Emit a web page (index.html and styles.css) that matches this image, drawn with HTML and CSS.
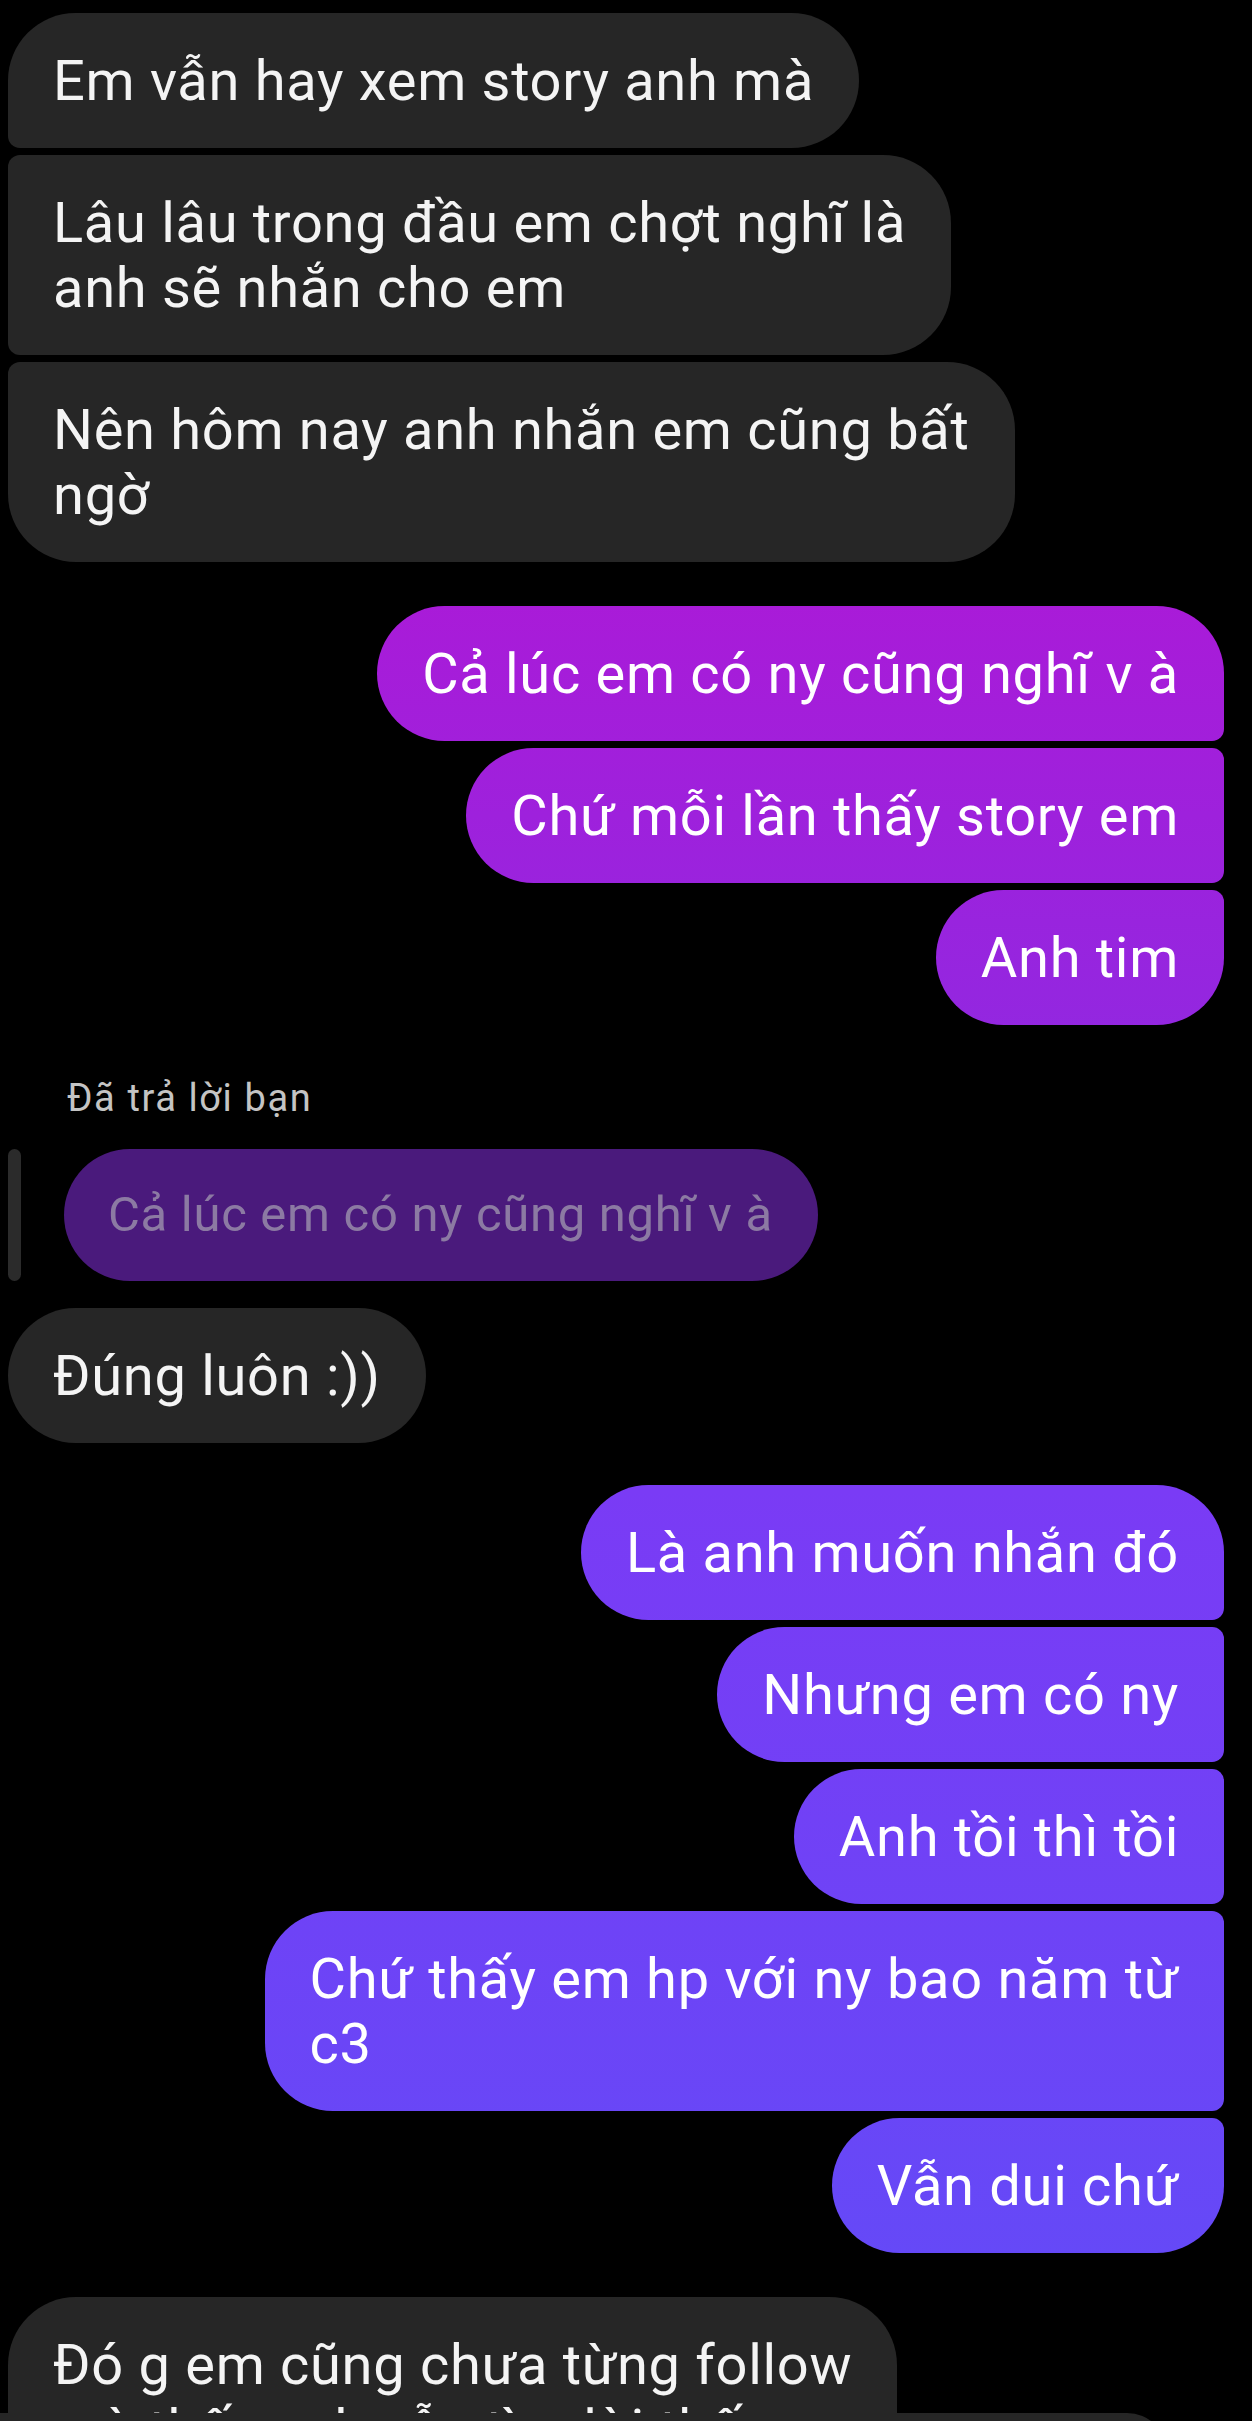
FILE: index.html
```html
<!DOCTYPE html>
<html lang="vi">
<head>
<meta charset="utf-8">
<title>Chat</title>
<link rel="stylesheet" href="styles.css">
</head>
<body>
<div class="chat">
  <div class="group in">
    <div class="msg first">Em vẫn hay xem story anh mà</div>
    <div class="msg mid">Lâu lâu trong đầu em chợt nghĩ là<br>anh sẽ nhắn cho em</div>
    <div class="msg last">Nên hôm nay anh nhắn em cũng bất<br>ngờ</div>
  </div>

  <div class="group out out-a">
    <div class="msg first">Cả lúc em có ny cũng nghĩ v à</div>
    <div class="msg mid">Chứ mỗi lần thấy story em</div>
    <div class="msg last">Anh tim</div>
  </div>

  <div class="reply-label">Đã trả lời bạn</div>
  <div class="reply-row">
    <div class="reply-bar"></div>
    <div class="reply-bubble">Cả lúc em có ny cũng nghĩ v à</div>
  </div>

  <div class="group in in-b">
    <div class="msg single">Đúng luôn :))</div>
  </div>

  <div class="group out out-b">
    <div class="msg first">Là anh muốn nhắn đó</div>
    <div class="msg mid">Nhưng em có ny</div>
    <div class="msg mid">Anh tồi thì tồi</div>
    <div class="msg mid">Chứ thấy em hp với ny bao năm từ<br>c3</div>
    <div class="msg last">Vẫn dui chứ</div>
  </div>

  <div class="group in in-c">
    <div class="msg first">Đó g em cũng chưa từng follow<br>mà thấy anh vẫn tìm lời thấy</div>
  </div>
</div>
<div class="composer"></div>
</body>
</html>
```

FILE: styles.css
```css
html, body {
  margin: 0;
  padding: 0;
  background: #000;
}

body {
  position: relative;
  height: 2421px;
  overflow: hidden;
  font-family: Roboto, "Noto Sans", "DejaVu Sans", sans-serif;
  color: #f4f4f4;
}

.chat {
  display: flex;
  flex-direction: column;
  padding-top: 13px;
}

.group {
  display: flex;
  flex-direction: column;
  gap: 7px;
}

.group.in {
  align-items: flex-start;
  padding-left: 8px;
}

.group.out {
  align-items: flex-end;
  padding-right: 28px;
}

.msg {
  font-size: 56px;
  line-height: 65px;
  padding: 36px 45px 34px;
  white-space: nowrap;
  letter-spacing: 0.7px;
}

.in .msg {
  background: #262626;
  border-radius: 12px 68px 68px 12px;
}

.in .msg.first {
  border-top-left-radius: 68px;
}

.in .msg.last {
  border-bottom-left-radius: 68px;
}

.in .msg.single {
  border-radius: 68px;
}

.out .msg {
  color: #fff;
  border-radius: 68px 12px 12px 68px;
  background: linear-gradient(to bottom,
      #b216d4 0px,
      #a91bd8 600px,
      #9327e0 1030px,
      #7a3bf5 1490px,
      #6549f7 2260px,
      #5f4ef8 2421px) fixed;
}

.out .msg.first {
  border-top-right-radius: 68px;
}

.out .msg.last {
  border-bottom-right-radius: 68px;
}

.out-a {
  margin-top: 44px;
}

.reply-label {
  margin-top: 51px;
  padding-left: 67px;
  font-size: 38px;
  line-height: 44px;
  letter-spacing: 1.6px;
  color: #c4c4c4;
}

.reply-row {
  display: flex;
  align-items: stretch;
  gap: 43px;
  padding-left: 8px;
  margin-top: 29px;
}

.reply-bar {
  width: 13px;
  border-radius: 7px;
  background: #2b2b2b;
}

.reply-bubble {
  font-size: 49px;
  line-height: 60px;
  letter-spacing: 0.7px;
  padding: 36px 45px 36px 44px;
  border-radius: 66px;
  background: #4a1a7c;
  color: #8c7aa3;
  white-space: nowrap;
}

.in-b {
  margin-top: 27px;
}

.out-b {
  margin-top: 42px;
}

.in-c {
  margin-top: 44px;
}

.composer {
  position: absolute;
  left: 0;
  top: 2413px;
  width: 1167px;
  height: 40px;
  background: #262626;
  border-top-right-radius: 40px;
}
```
